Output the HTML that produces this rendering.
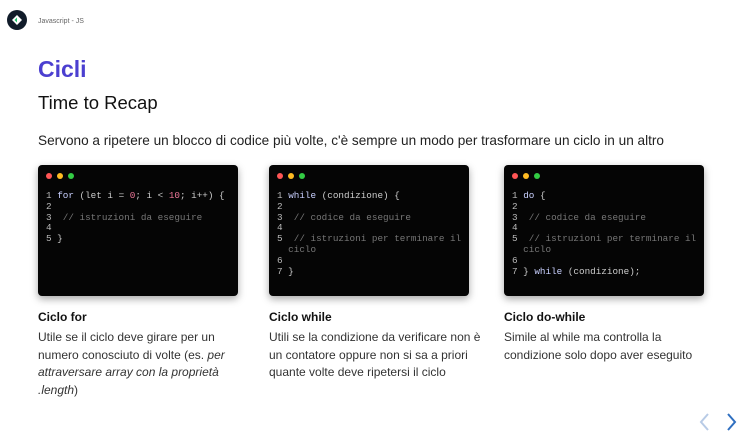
<!DOCTYPE html>
<html><head><meta charset="utf-8"><style>
*{margin:0;padding:0;box-sizing:border-box}
body{width:740px;height:440px;background:#fff;position:relative;overflow:hidden;font-family:"Liberation Sans",sans-serif;color:#222}
.a{position:absolute}
.box{position:absolute;top:165px;width:200px;height:131px;background:#050505;border-radius:4px;box-shadow:0 3px 8px rgba(0,0,0,.35)}
.dots{position:absolute;left:8px;top:8px;display:flex}
.dots i{display:block;width:6px;height:6px;border-radius:50%;margin-right:5px}
.code{position:absolute;left:8px;top:26px;font-family:"Liberation Mono",monospace;font-size:9.3px;line-height:10.8px;color:#ccc;white-space:pre}
.n{color:#bbb}.k{color:#c9d0ff}.c{color:#777}.num{color:#e79}
h4{position:absolute;top:310px;font-size:12px;font-weight:bold;color:#111}
.t{position:absolute;top:329px;font-size:12px;line-height:17.5px;color:#333}
</style></head><body>
<svg class="a" style="left:7px;top:10px" width="20" height="20" viewBox="0 0 20 20"><circle cx="10" cy="10" r="10" fill="#111c2a"/><path d="M10 5 L15 10 L10 15 L5 10Z" fill="#fff"/><path d="M10 7.5 L7.5 10 L10 12.5Z" fill="#1fc16b"/></svg>
<div class="a" style="left:38px;top:18px;font-size:7px;color:#666">Javascript - JS</div>
<div class="a" style="left:38px;top:56px;font-size:23px;font-weight:bold;color:#4b3fd0">Cicli</div>
<div class="a" style="left:38px;top:92px;font-size:18.5px;color:#111">Time to Recap</div>
<div class="a" style="left:38px;top:133px;font-size:13.6px;color:#222">Servono a ripetere un blocco di codice più volte, c'è sempre un modo per trasformare un ciclo in un altro</div>

<div class="box" style="left:38px"><div class="dots"><i style="background:#f55"></i><i style="background:#fb2"></i><i style="background:#3c4"></i></div>
<div class="code"><span class="n">1</span> <span class="k">for</span> (let i = <span class="num">0</span>; i &lt; <span class="num">10</span>; i++) {
<span class="n">2</span>
<span class="n">3</span>  <span class="c">// istruzioni da eseguire</span>
<span class="n">4</span>
<span class="n">5</span> }</div></div>

<div class="box" style="left:269px"><div class="dots"><i style="background:#f55"></i><i style="background:#fb2"></i><i style="background:#3c4"></i></div>
<div class="code"><span class="n">1</span> <span class="k">while</span> (condizione) {
<span class="n">2</span>
<span class="n">3</span>  <span class="c">// codice da eseguire</span>
<span class="n">4</span>
<span class="n">5</span>  <span class="c">// istruzioni per terminare il</span>
  <span class="c">ciclo</span>
<span class="n">6</span>
<span class="n">7</span> }</div></div>

<div class="box" style="left:504px"><div class="dots"><i style="background:#f55"></i><i style="background:#fb2"></i><i style="background:#3c4"></i></div>
<div class="code"><span class="n">1</span> <span class="k">do</span> {
<span class="n">2</span>
<span class="n">3</span>  <span class="c">// codice da eseguire</span>
<span class="n">4</span>
<span class="n">5</span>  <span class="c">// istruzioni per terminare il</span>
  <span class="c">ciclo</span>
<span class="n">6</span>
<span class="n">7</span> } <span class="k">while</span> (condizione);</div></div>

<h4 style="left:38px">Ciclo for</h4>
<div class="t" style="left:38px;width:200px">Utile se il ciclo deve girare per un numero conosciuto di volte (es. <i>per attraversare array con la proprietà .length</i>)</div>
<h4 style="left:269px">Ciclo while</h4>
<div class="t" style="left:269px;width:215px">Utili se la condizione da verificare non è un contatore oppure non si sa a priori quante volte deve ripetersi il ciclo</div>
<h4 style="left:504px">Ciclo do-while</h4>
<div class="t" style="left:504px;width:200px">Simile al while ma controlla la condizione solo dopo aver eseguito</div>

<svg class="a" style="left:698px;top:412px" width="40" height="20" viewBox="0 0 40 20"><path d="M10 2 L3 10 L10 18" stroke="#b8cbe6" stroke-width="2" fill="none"/><path d="M30 2 L37 10 L30 18" stroke="#2f6fc0" stroke-width="2" fill="none"/></svg>
</body></html>
